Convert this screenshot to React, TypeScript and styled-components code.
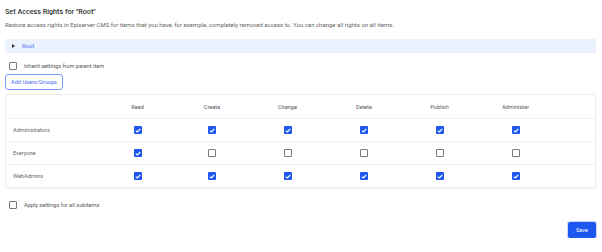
import React, { useState } from 'react';
import styled, { createGlobalStyle } from 'styled-components';

const GlobalStyle = createGlobalStyle`
  body {
    margin: 0;
    background: #fff;
    font-family: 'Roboto', 'Liberation Sans', sans-serif;
    color: #555;
  }
`;

const Page = styled.div`
  width: 602px;
  padding: 0 6px 0 5px;
  box-sizing: border-box;
  display: flex;
  flex-direction: column;
`;

const Title = styled.h1`
  margin: 7px 0 0;
  font-size: 7.2px;
  line-height: 9px;
  font-weight: 500;
  color: #333;
`;

const Description = styled.p`
  margin: 5px 0 0;
  font-size: 6px;
  line-height: 7px;
  color: #666;
`;

const TreeBar = styled.div`
  margin-top: 11px;
  height: 14px;
  background: #ebf1fd;
  display: flex;
  align-items: center;
  padding-left: 7px;
  gap: 7px;
  font-size: 5.8px;
  color: #4a6ef2;
`;

const Caret = styled.span`
  width: 0;
  height: 0;
  border-top: 2px solid transparent;
  border-bottom: 2px solid transparent;
  border-left: 3px solid #333;
`;

const OptionRow = styled.label<{ $top: number }>`
  margin-top: ${(p) => p.$top}px;
  padding-left: 4px;
  display: flex;
  align-items: center;
  gap: 7px;
  font-size: 5.6px;
  color: #555;
  height: 9px;
`;

const OutlineButton = styled.button`
  margin-top: 4px;
  align-self: flex-start;
  height: 16px;
  width: 58px;
  padding: 0;
  border: 1px solid #7b9cf4;
  border-radius: 3px;
  background: #fff;
  color: #4a6ef2;
  font-family: inherit;
  font-size: 5.6px;
`;

const Table = styled.div`
  margin-top: 4px;
  border: 1px solid #ececec;
  border-radius: 2px;
  box-shadow: 0 1px 1px rgba(0, 0, 0, 0.04);
`;

const Row = styled.div<{ $header?: boolean }>`
  display: grid;
  grid-template-columns: 94px 75px 74px 77px 76px 75px 77px 1fr;
  align-items: center;
  height: ${(p) => (p.$header ? 23 : 22)}px;
  & + & {
    border-top: 1.5px solid #efefef;
  }
`;

const RowLabel = styled.div`
  padding-left: 7px;
  font-size: 5.6px;
  color: #666;
`;

const HeadCell = styled.div`
  text-align: center;
  font-size: 5.6px;
  color: #555;
  padding-top: 1px;
`;

const Cell = styled.div`
  display: flex;
  justify-content: center;
`;

const Box = styled.span<{ $checked: boolean }>`
  width: 8px;
  height: 8px;
  box-sizing: border-box;
  border-radius: 1px;
  display: flex;
  align-items: center;
  justify-content: center;
  background: ${(p) => (p.$checked ? '#1e56f0' : '#fff')};
  border: ${(p) => (p.$checked ? 'none' : '1.3px solid #7a7a7a')};
  cursor: pointer;
`;

const Footer = styled.div`
  margin-top: 13px;
  display: flex;
  justify-content: flex-end;
`;

const PrimaryButton = styled.button`
  width: 28px;
  height: 16px;
  padding: 0;
  border: none;
  border-radius: 2px;
  background: #1e56f0;
  color: #fff;
  font-family: inherit;
  font-size: 5.6px;
  box-shadow: 0 0 0 1px #c9d7fb;
`;

const Checkbox: React.FC<{ checked: boolean; onToggle?: () => void }> = ({ checked, onToggle }) => (
  <Box $checked={checked} onClick={onToggle}>
    {checked && (
      <svg width="6" height="5" viewBox="0 0 6 5">
        <path d="M0.8 2.6 L2.3 3.9 L5.3 1" stroke="#fff" strokeWidth="1.1" fill="none" />
      </svg>
    )}
  </Box>
);

const columns = ['Read', 'Create', 'Change', 'Delete', 'Publish', 'Administer'];

const initialRights: { name: string; rights: boolean[] }[] = [
  { name: 'Administrators', rights: [true, true, true, true, true, true] },
  { name: 'Everyone', rights: [true, false, false, false, false, false] },
  { name: 'WebAdmins', rights: [true, true, true, true, true, true] },
];

const App: React.FC = () => {
  const [rights, setRights] = useState(initialRights);
  const [inherit, setInherit] = useState(false);
  const [applyAll, setApplyAll] = useState(false);

  const toggle = (row: number, col: number) => {
    setRights((prev) =>
      prev.map((r, i) =>
        i === row ? { ...r, rights: r.rights.map((v, j) => (j === col ? !v : v)) } : r
      )
    );
  };

  return (
    <Page>
      <GlobalStyle />
      <Title>Set Access Rights for "Root"</Title>
      <Description>
        Restore access rights in Episerver CMS for items that you have, for example, completely
        removed access to. You can change all rights on all items.
      </Description>
      <TreeBar>
        <Caret />
        Root
      </TreeBar>
      <OptionRow $top={8}>
        <Checkbox checked={inherit} onToggle={() => setInherit(!inherit)} />
        Inherit settings from parent item
      </OptionRow>
      <OutlineButton>Add Users/Groups</OutlineButton>
      <Table>
        <Row $header>
          <div />
          {columns.map((c) => (
            <HeadCell key={c}>{c}</HeadCell>
          ))}
        </Row>
        {rights.map((r, i) => (
          <Row key={r.name}>
            <RowLabel>{r.name}</RowLabel>
            {r.rights.map((v, j) => (
              <Cell key={j}>
                <Checkbox checked={v} onToggle={() => toggle(i, j)} />
              </Cell>
            ))}
          </Row>
        ))}
      </Table>
      <OptionRow $top={12}>
        <Checkbox checked={applyAll} onToggle={() => setApplyAll(!applyAll)} />
        Apply settings for all subitems
      </OptionRow>
      <Footer>
        <PrimaryButton>Save</PrimaryButton>
      </Footer>
    </Page>
  );
};

export default App;
